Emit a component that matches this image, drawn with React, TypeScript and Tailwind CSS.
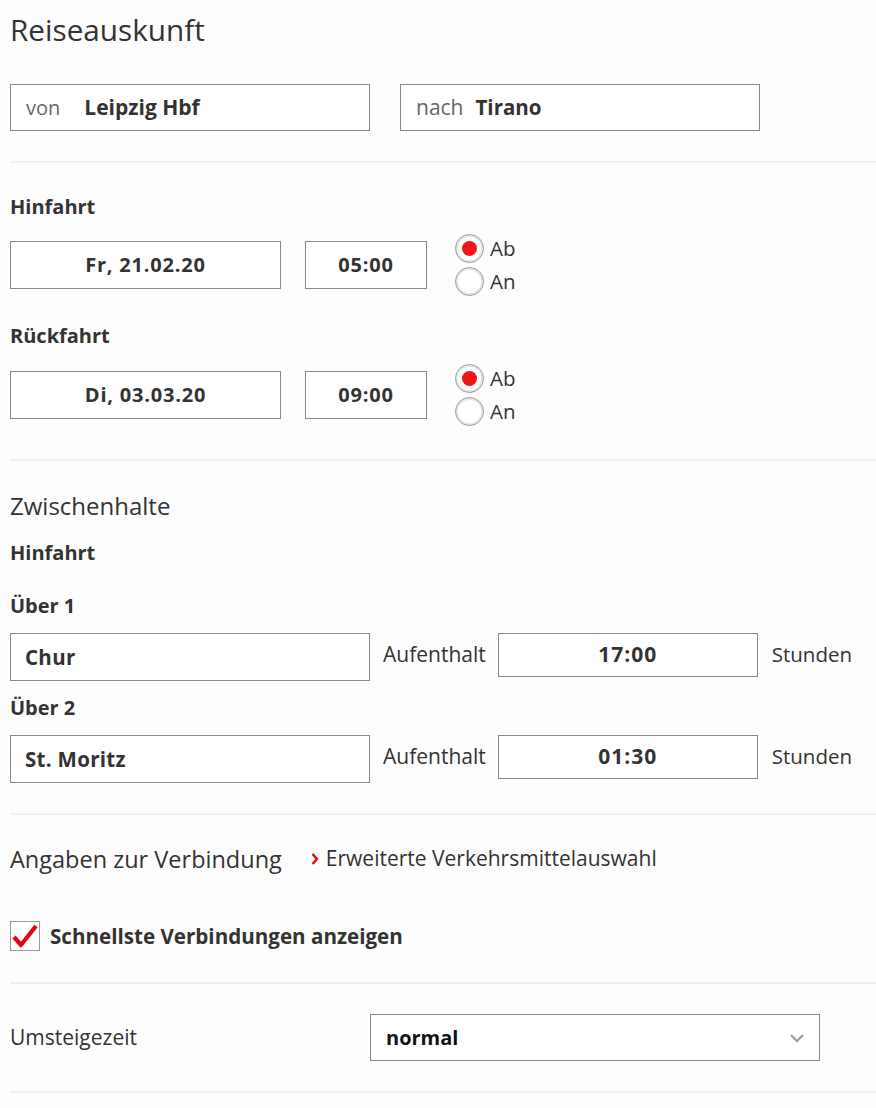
import React from "react";

const font = { fontFamily: '"Open Sans", "Noto Sans", sans-serif' };

function Radio({ checked, label }: { checked?: boolean; label: string }) {
  return (
    <div className="flex items-center gap-[6px] h-[33px]">
      <div className="w-[29px] h-[29px] rounded-full border border-[#9a9a9a] bg-white shadow-[inset_0_0_0_2px_#e6e6e6] flex items-center justify-center">
        {checked && <div className="w-[15px] h-[15px] rounded-full bg-[#f01414]" />}
      </div>
      <span className="text-[20.5px] text-[#333]">{label}</span>
    </div>
  );
}

function Divider() {
  return <div className="h-[2px] bg-[#f0f0f0] ml-[10px]" />;
}

function DateRow({ date, time }: { date: string; time: string }) {
  return (
    <div className="flex items-center h-[66px]">
      <div className="w-[271px] h-[48px] border-[1.5px] border-[#858a8d] bg-white flex items-center justify-center font-bold text-[20px] tracking-[0.8px] text-[#333]">
        {date}
      </div>
      <div className="ml-[24px] w-[122px] h-[48px] border-[1.5px] border-[#858a8d] bg-white flex items-center justify-center font-bold text-[20px] tracking-[0.8px] text-[#333]">
        {time}
      </div>
      <div className="ml-[28px] flex flex-col">
        <Radio checked label="Ab" />
        <Radio label="An" />
      </div>
    </div>
  );
}

function StopRow({ label, city, time }: { label: string; city: string; time: string }) {
  return (
    <div>
      <div className="font-bold text-[20px] text-[#333] h-[27px] leading-[27px]">{label}</div>
      <div className="mt-[14px] flex items-start">
        <div className="w-[360px] h-[48px] border-[1.5px] border-[#858a8d] bg-white flex items-center pl-[14px] font-bold text-[20.5px] tracking-[0.3px] text-[#333]">
          {city}
        </div>
        <span className="ml-[13px] mt-[7px] h-[28px] leading-[28px] text-[21px] text-[#333]">Aufenthalt</span>
        <div className="ml-[12px] w-[260px] h-[44px] border-[1.5px] border-[#858a8d] bg-white flex items-center justify-center font-bold text-[21px] tracking-[1px] text-[#333]">
          {time}
        </div>
        <span className="ml-[14px] mt-[7px] h-[28px] leading-[28px] text-[20.5px] text-[#333]">Stunden</span>
      </div>
    </div>
  );
}

export default function App() {
  return (
    <div className="w-[876px] h-[1108px] bg-[#fdfdfd] overflow-hidden text-[#333]" style={font}>
      <div className="pl-[10px] pt-[10px] text-[29.7px] leading-[40px] text-[#333]">Reiseauskunft</div>

      <div className="pl-[10px] mt-[34px] flex gap-[30px]">
        <div className="w-[360px] h-[47px] border-[1.5px] border-[#858a8d] bg-white flex items-center pl-[15px]">
          <span className="text-[20px] text-[#666]">von</span>
          <span className="ml-[24px] text-[21px] font-bold text-[#333]">Leipzig Hbf</span>
        </div>
        <div className="w-[360px] h-[47px] border-[1.5px] border-[#858a8d] bg-white flex items-center pl-[15px]">
          <span className="text-[21px] text-[#666]">nach</span>
          <span className="ml-[12px] text-[20.5px] font-bold text-[#333]">Tirano</span>
        </div>
      </div>

      <div className="mt-[30px]"><Divider /></div>

      <div className="pl-[10px] pt-[30px]">
        <div className="font-bold text-[20px] h-[27px] leading-[27px]">Hinfahrt</div>
        <div className="mt-[12px]">
          <DateRow date="Fr, 21.02.20" time="05:00" />
        </div>
        <div className="mt-[24px] font-bold text-[20px] h-[27px] leading-[27px]">Rückfahrt</div>
        <div className="mt-[13px]">
          <DateRow date="Di, 03.03.20" time="09:00" />
        </div>
      </div>

      <div className="mt-[31px]"><Divider /></div>

      <div className="pl-[10px] pt-[30px]">
        <div className="text-[24px] h-[30px] leading-[30px]">Zwischenhalte</div>
        <div className="mt-[18px] font-bold text-[20px] h-[27px] leading-[27px]">Hinfahrt</div>
        <div className="mt-[26px]">
          <StopRow label="Über 1" city="Chur" time="17:00" />
        </div>
        <div className="mt-[13px]">
          <StopRow label="Über 2" city="St. Moritz" time="01:30" />
        </div>
      </div>

      <div className="mt-[30px]"><Divider /></div>

      <div className="pl-[10px] pt-[28px] flex items-center">
        <span className="text-[23.5px] h-[30px] leading-[30px]">Angaben zur Verbindung</span>
        <svg className="ml-[28px]" width="10" height="14" viewBox="0 0 10 14">
          <path d="M2.5 2 L7 7 L2.5 12" fill="none" stroke="#ec0016" strokeWidth="2.5" />
        </svg>
        <span className="ml-[6px] text-[21px]">Erweiterte Verkehrsmittelauswahl</span>
      </div>

      <div className="pl-[10px] mt-[46px] flex items-center">
        <div className="w-[30px] h-[30px] border-[1.5px] border-[#9a9a9a] bg-white flex items-center justify-center">
          <svg width="28" height="26" viewBox="0 0 28 26">
            <path d="M3 14 L10 22 L25 3" fill="none" stroke="#ec0016" strokeWidth="4.2" strokeLinejoin="round" />
          </svg>
        </div>
        <span className="ml-[10px] font-bold text-[20.6px]">Schnellste Verbindungen anzeigen</span>
      </div>

      <div className="mt-[31px]"><Divider /></div>

      <div className="pl-[10px] pt-[30px] flex items-center">
        <span className="text-[21px] w-[360px]">Umsteigezeit</span>
        <div className="w-[450px] h-[47px] border-[1.5px] border-[#858a8d] bg-white flex items-center pl-[15px] pr-[14px] justify-between">
          <span className="font-bold text-[20px] text-[#111]">normal</span>
          <svg width="16" height="10" viewBox="0 0 16 10">
            <path d="M2 2 L8 8 L14 2" fill="none" stroke="#999" strokeWidth="2" />
          </svg>
        </div>
      </div>

      <div className="mt-[30px]"><Divider /></div>
    </div>
  );
}
